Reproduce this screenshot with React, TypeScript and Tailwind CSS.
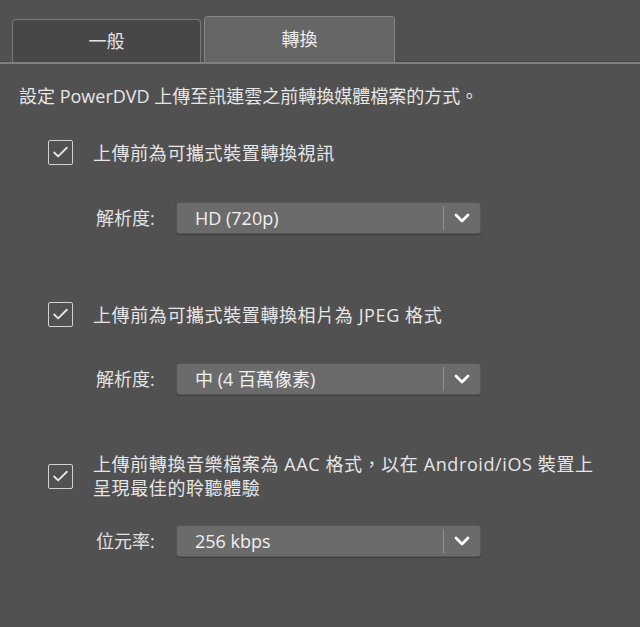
import { Check, ChevronDown } from 'lucide-react'

const font = { fontFamily: '"Open Sans", "Noto Sans CJK TC", "Noto Sans", sans-serif' }

function Tabs() {
  return (
    <div className="flex items-end px-[12px] pt-[16px] border-b-2 border-b-[#808080] shadow-[0_-1px_0_#464646_inset]">
      <div className="flex h-[43px] w-[189px] items-center justify-center rounded-t-[4px] border border-b-0 border-[#7a7a7a] bg-[#474747] text-[18px] text-[#e4e4e4]">
        一般
      </div>
      <div className="ml-[3px] flex h-[46px] w-[191px] items-center justify-center rounded-t-[4px] border border-b-0 border-[#858585] bg-[#666666] text-[18px] text-[#ececec]">
        轉換
      </div>
    </div>
  )
}

function CheckRow({ children, top }: { children: React.ReactNode; top: string }) {
  return (
    <div className={`flex items-center pl-[48px] ${top}`}>
      <span className="flex size-[25px] shrink-0 items-center justify-center rounded-[2px] border-[1.5px] border-[#d2d2d2]">
        <Check className="size-[19px] text-[#e8e8e8]" strokeWidth={2.25} />
      </span>
      <div className="ml-[20px] text-[18px] leading-[24px] tracking-[0.6px] text-[#e6e6e6]">{children}</div>
    </div>
  )
}

function SelectRow({ label, value, top }: { label: string; value: string; top: string }) {
  return (
    <div className={`flex items-center ${top}`}>
      <span className="w-[176px] pl-[96px] text-[18px] leading-[24px] text-[#e2e2e2]">{label}</span>
      <div className="flex h-[32px] w-[305px] items-center rounded-[3px] border border-[#575757] bg-[#6b6b6b] shadow-[0_1px_1px_#3e3e3e]">
        <span className="flex-1 pl-[18px] text-[18px] leading-[24px] text-[#f0f0f0]">{value}</span>
        <span className="h-[24px] w-px bg-[#8f8f8f]" />
        <span className="flex w-[36px] items-center justify-center">
          <ChevronDown className="size-[24px] text-white" strokeWidth={2.75} />
        </span>
      </div>
    </div>
  )
}

export default function App() {
  return (
    <div className="h-[627px] w-[640px] overflow-hidden bg-[#515151]" style={font}>
      <Tabs />
      <p className="mt-[20px] pl-[19px] text-[18px] leading-[24px] text-[#e6e6e6]">
        設定 PowerDVD 上傳至訊連雲之前轉換媒體檔案的方式。
      </p>
      <CheckRow top="mt-[32px]">上傳前為可攜式裝置轉換視訊</CheckRow>
      <SelectRow top="mt-[37px]" label="解析度:" value="HD (720p)" />
      <CheckRow top="mt-[68px]">上傳前為可攜式裝置轉換相片為 JPEG 格式</CheckRow>
      <SelectRow top="mt-[36px]" label="解析度:" value="中 (4 百萬像素)" />
      <CheckRow top="mt-[57px]">
        上傳前轉換音樂檔案為 AAC 格式，以在 Android/iOS 裝置上
        <br />
        呈現最佳的聆聽體驗
      </CheckRow>
      <SelectRow top="mt-[25px]" label="位元率:" value="256 kbps" />
    </div>
  )
}
